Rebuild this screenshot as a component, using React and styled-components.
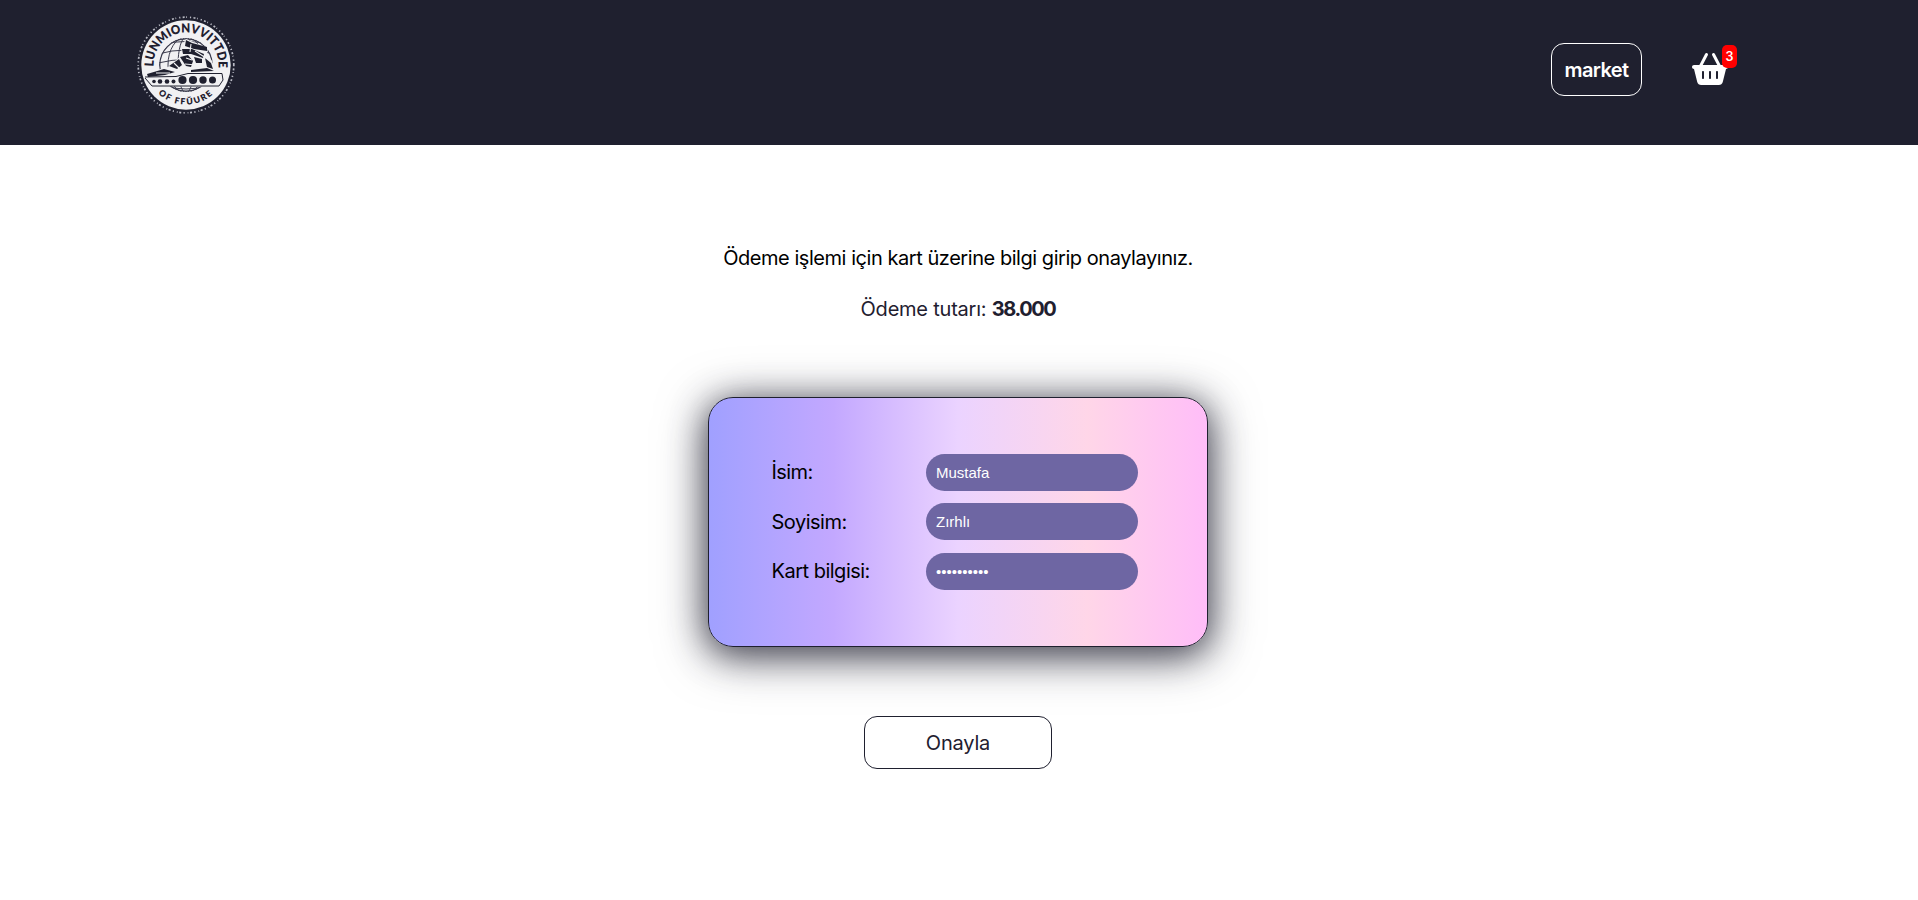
import React from "react";
import styled, { createGlobalStyle } from "styled-components";
import { FaBasketShopping } from "react-icons/fa6";

const navy = "#1f202f";

const GlobalStyle = createGlobalStyle`
  *, *::before, *::after { box-sizing: border-box; }
  body {
    margin: 0;
    background: #fff;
    color: #000;
    font-family: Inter, "Noto Sans", sans-serif;
    font-size: 20px;
  }
`;

const Header = styled.header`
  display: flex;
  justify-content: space-between;
  align-items: flex-start;
  height: 145px;
  padding: 15px 181px 0 136px;
  background: ${navy};
`;

const Logo = styled.svg`
  width: 100px;
  height: 100px;
  display: block;
`;

const Nav = styled.nav`
  display: flex;
  align-items: center;
  gap: 50px;
  margin-top: 28px;
`;

const OutlineButton = styled.button`
  width: ${(p) => p.$width}px;
  height: 53px;
  padding: 0;
  border: 1px solid ${(p) => p.$color};
  border-radius: 13px;
  background: transparent;
  color: ${(p) => p.$color};
  font-family: inherit;
  font-size: 20px;
  font-weight: ${(p) => p.$weight};
  letter-spacing: ${(p) => p.$spacing}px;
`;

const Basket = styled.div`
  position: relative;
  display: flex;
  width: 45px;
  height: 34px;
  color: #fff;
`;

const BasketIcon = styled(FaBasketShopping)`
  width: 36px;
  height: 32px;
`;

const Badge = styled.span`
  position: absolute;
  top: -8px;
  right: 0;
  display: grid;
  place-items: center;
  width: 15px;
  height: 23px;
  border-radius: 5px;
  background: #f00;
  font-size: 12.5px;
  font-weight: 600;
`;

const Main = styled.main`
  display: flex;
  flex-direction: column;
  align-items: center;
  padding: 98px 2px 0 0;
`;

const Message = styled.p`
  margin: 0 0 21px;
  line-height: 30px;
  font-weight: 400;
  letter-spacing: ${(p) => p.$spacing}px;
  white-space: nowrap;
  color: ${(p) => p.$color};
`;

const Amount = styled.b`
  letter-spacing: -1.4px;
`;

const Card = styled.form`
  display: flex;
  flex-direction: column;
  justify-content: center;
  gap: 12.4px;
  width: 500px;
  height: 250px;
  margin: 52px 0 69px;
  padding: 0 69px 0.5px 62.5px;
  border: 1px solid ${navy};
  border-radius: 25px;
  background: linear-gradient(90deg, #a0a0ff, #c3a8ff 25%, #ebd3ff 50%, #ffd6e8 76%, #ffbdf8);
  box-shadow: 0 6px 34px ${navy}b3, 0 8px 50px ${navy}80;
`;

const Field = styled.label`
  display: flex;
  justify-content: space-between;
  align-items: center;
  height: 37px;
  font-weight: 400;
  letter-spacing: ${(p) => p.$spacing}px;
`;

const Input = styled.input`
  width: 212px;
  height: 37px;
  padding: 0 10px;
  border: 0;
  border-radius: 20px;
  background: #6e66a3;
  color: #fff;
  font-family: "Liberation Sans", Arial, sans-serif;
  font-size: 15px;
`;

function BrandLogo() {
  return (
    <Logo viewBox="0 0 100 100">
      <defs>
        <path id="arcTop" d="M19.4 61 A32.5 32.5 0 1 1 80.6 61" />
        <path id="arcBottom" d="M11 60 A40.5 40.5 0 0 0 89 60" />
        <clipPath id="globe"><circle cx="50" cy="50" r="27" /></clipPath>
      </defs>
      <circle cx="50" cy="50" r="47.8" fill="none" stroke="#b9bac4" strokeWidth="1.7" strokeDasharray="1.2 2.3 2 1.6 .8 3" />
      <circle cx="50" cy="50" r="44.7" fill="#f1f1f3" />
      <g clipPath="url(#globe)" fill="none" stroke="#3b3c4d" strokeWidth="1">
        <circle cx="50" cy="50" r="26.3" strokeWidth="1.4" />
        <ellipse cx="50" cy="50" rx="18" ry="28" />
        <ellipse cx="50" cy="50" rx="8" ry="28" />
        <path d="M22 39 Q50 31 78 39 M22 48 Q50 41 78 48 M22 70 Q50 78 78 70 M28 29 Q50 24 72 29" />
      </g>
      <path d="M7 61 L14 57 L32 52 L46 40 L45 32 L50 24 L62 29 L72 33 L71 39 L76 46 L79 54 L88 61 L84 72 L15 71 Z" fill="#f1f1f3" />
      <g fill={navy}>
        <path d="M50 25 L56 28 L71 32 L71 36 L58 34 L49 31 Z M46 34 L56 34 L68 39 L67 43 L55 39 L47 39 Z M44 42 L52 40 L57 46 L55 52 L50 51 Z M33 51 L43 44 L46 50 L41 54 Z M11 59 L28 54 L39 57 L29 60 L12 62 Z M58 42 L66 44 L66 48 L60 48 Z M69 43 L75 48 L77 54 L71 52 Z M55 55 L71 53 L78 56 L55 57 Z" />
        <circle cx="18" cy="66.5" r="1.8" />
        <circle cx="24" cy="66.5" r="2.3" />
        <circle cx="31" cy="66.5" r="2.3" />
        <circle cx="37.5" cy="66.5" r="2" />
        <circle cx="46.5" cy="65" r="4.1" />
        <circle cx="57" cy="65" r="4.1" />
        <circle cx="67" cy="65" r="3.7" />
        <circle cx="76.5" cy="65" r="3.5" />
      </g>
      <path d="M9 62 L40 61.5 L52 58.5 H86 L87 65 L83 71 H16 L9 63" fill="none" stroke={navy} strokeWidth="1" />
      <path d="M49 49 L60 50 M59 36 L70 43 M38 48 L43 53 M50 43 L56 45 M20 58 L34 58 M55 29 L54 37" stroke="#f1f1f3" strokeWidth="1.1" />
      <text fill={navy} fontFamily="Lato, sans-serif" fontWeight="800" fontSize="12.5">
        <textPath href="#arcTop" startOffset="9.8" textLength="106" lengthAdjust="spacingAndGlyphs">LUNMIONVVITTDE</textPath>
      </text>
      <text fill={navy} fontFamily="Lato, sans-serif" fontWeight="800" fontSize="8.6" textAnchor="middle" letterSpacing="1.6">
        <textPath href="#arcBottom" startOffset="50%">OF FFŬURE</textPath>
      </text>
    </Logo>
  );
}

const fields = [
  { label: "İsim:", value: "Mustafa", type: "text", spacing: -0.55 },
  { label: "Soyisim:", value: "Zırhlı", type: "text", spacing: -0.5 },
  { label: "Kart bilgisi:", value: "1234567890", type: "password", spacing: -0.5 },
];

export default function App() {
  return (
    <>
      <GlobalStyle />
      <Header>
        <BrandLogo />
        <Nav>
          <OutlineButton $width={91} $color="#fff" $weight={600} $spacing={-0.6}>market</OutlineButton>
          <Basket>
            <BasketIcon />
            <Badge>3</Badge>
          </Basket>
        </Nav>
      </Header>
      <Main>
        <Message $color="#000" $spacing={-0.45}>Ödeme işlemi için kart üzerine bilgi girip onaylayınız.</Message>
        <Message $color={navy} $spacing={-0.22}>Ödeme tutarı: <Amount>38.000</Amount></Message>
        <Card>
          {fields.map((f) => (
            <Field key={f.label} $spacing={f.spacing}>
              {f.label}
              <Input type={f.type} defaultValue={f.value} />
            </Field>
          ))}
        </Card>
        <OutlineButton $width={188} $color={navy} $weight={400} $spacing={-0.2}>Onayla</OutlineButton>
      </Main>
    </>
  );
}
